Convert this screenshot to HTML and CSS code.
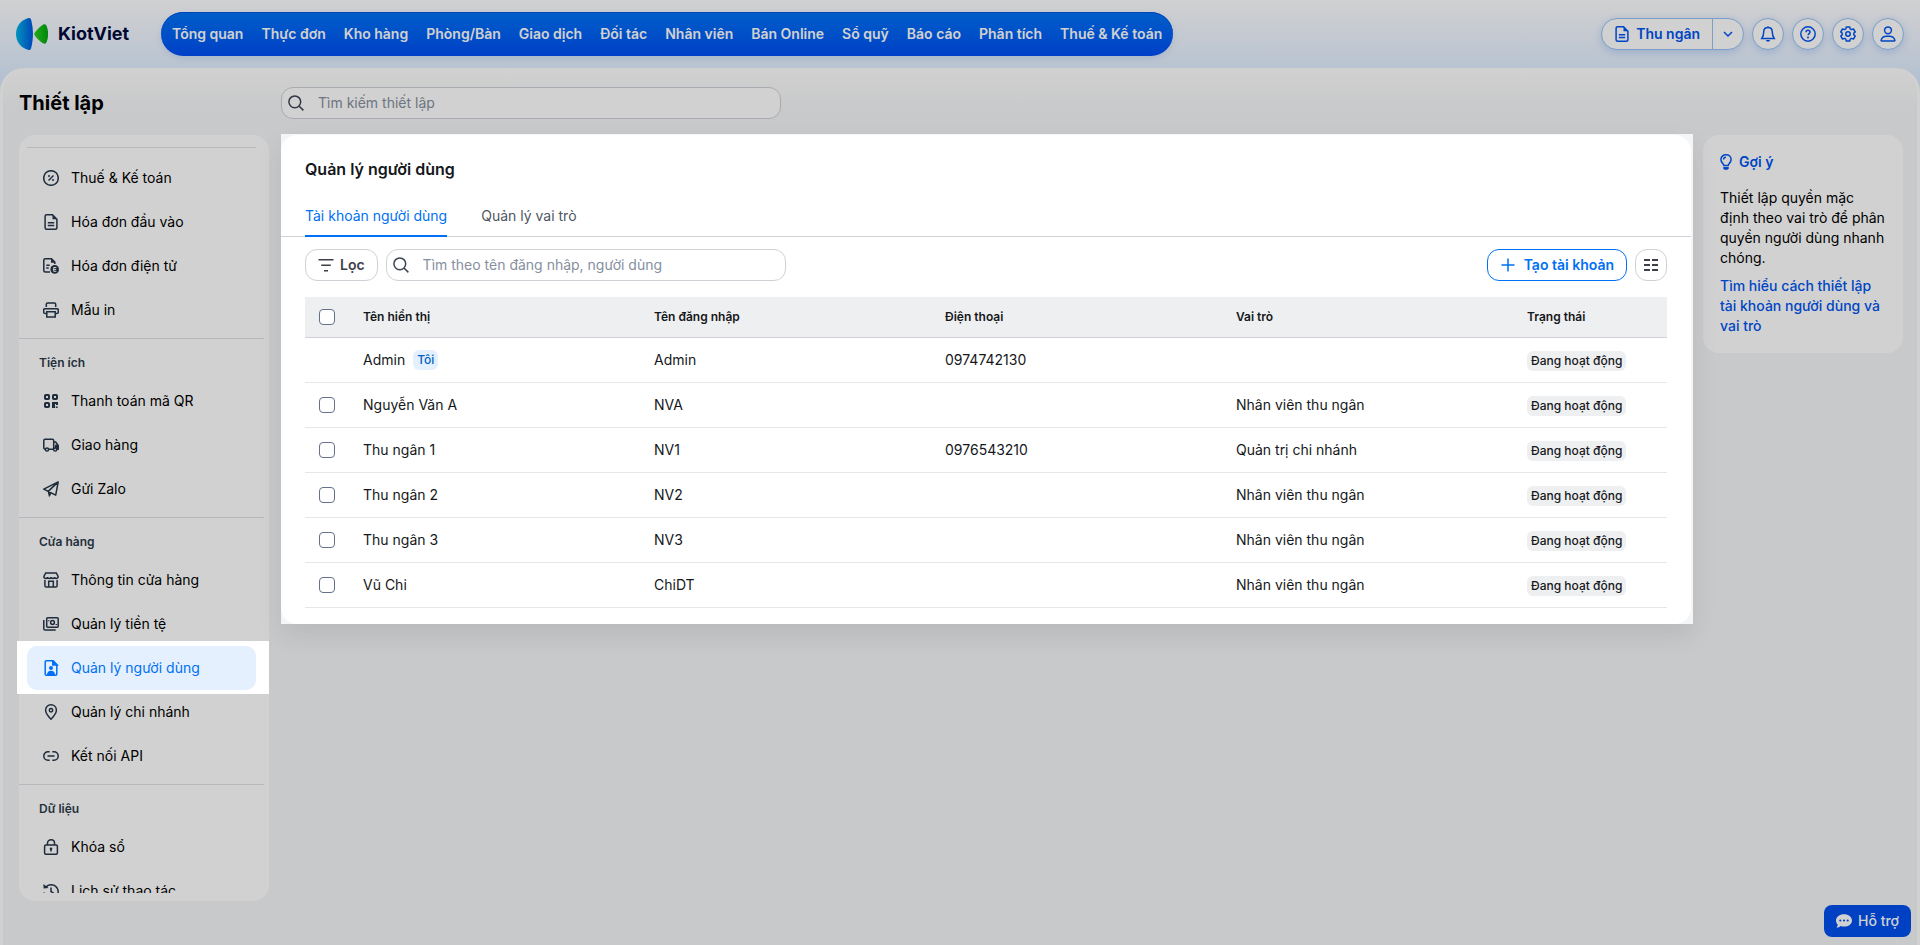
FILE: index.html
```html
<!DOCTYPE html>
<html lang="vi">
<head>
  <meta charset="UTF-8">
  <meta name="viewport" content="width=device-width, initial-scale=1">
  <title>KiotViet - Thiết lập</title>
  <link rel="stylesheet" href="styles.css">
</head>
<body>
  <!-- icon sprite -->
  <svg class="sprite" aria-hidden="true">
    <symbol id="i-doc" viewBox="0 0 16 16"><path d="M9.5.8H3.600c-.9 0-1.500.6-1.500 1.500v11.400c0 .9.6 1.500 1.500 1.500h8.800c.9 0 1.500-.6 1.500-1.500V5.200z"/><path d="M9.500.8v4.400h4.400z" fill="currentColor" stroke="none"/><path d="M4.800 8.800h6.400M4.800 11.600h6.400"/></symbol>
    <symbol id="i-chev" viewBox="0 0 16 16"><path d="m4 6 4 4 4-4"/></symbol>
    <symbol id="i-bell" viewBox="0 0 16 16"><path d="M8 1.500c-2.700 0-4.300 2-4.300 4.500 0 3.300-.8 4.800-1.900 6.400h12.400c-1.100-1.600-1.900-3.100-1.900-6.400 0-2.500-1.600-4.500-4.300-4.500zM8 .3v1.200"/><path d="M5.800 14h4.400c-.3 1-1.100 1.700-2.200 1.700S6.100 15 5.800 14z" fill="currentColor" stroke="none"/></symbol>
    <symbol id="i-help" viewBox="0 0 16 16"><circle cx="8" cy="8" r="7.200"/><path d="M6 6.300c0-1.200.8-2 2-2s2 .8 2 1.900c0 1.300-1.900 1.500-1.900 3.100"/><circle cx="8" cy="11.600" r="1" fill="currentColor" stroke="none"/></symbol>
    <symbol id="i-gear" viewBox="0 0 16 16"><path stroke-linejoin="round" d="M6.300.9h3.400l.5 2 1.300.7 2-.6 1.700 2.900L13.800 7.300v1.400l1.400 1.400-1.700 2.900-2-.6-1.300.7-.5 2H6.300l-.5-2-1.300-.7-2 .6L.8 10.100l1.400-1.400V7.300L.8 5.900 2.500 3l2 .6 1.300-.7z"/><circle cx="8" cy="8" r="2.200"/></symbol>
    <symbol id="i-user" viewBox="0 0 16 16"><circle cx="8" cy="4.300" r="3.400"/><path d="M1.800 15c-.6 0-.9-.5-.7-1 .8-2.300 2.900-3.800 5.400-3.800h3c2.500 0 4.600 1.500 5.400 3.800.2.500-.1 1-.7 1z"/></symbol>
    <symbol id="i-search" viewBox="0 0 16 16"><circle cx="6.800" cy="6.800" r="5.900"/><path d="m11 11 4.400 4.400"/></symbol>
    <symbol id="i-percent" viewBox="0 0 16 16"><circle cx="8" cy="8" r="7.300"/><path d="m5.500 10.500 5-5"/><circle cx="6" cy="6" r="1" fill="currentColor" stroke="none"/><circle cx="10" cy="10" r="1" fill="currentColor" stroke="none"/></symbol>
    <symbol id="i-einvoice" viewBox="0 0 16 16"><path d="M7 14H2.300C1.400 14 .8 13.400.8 12.500V2.300C.8 1.400 1.400.8 2.300.8H8.500l3.300 3.300v2"/><path d="M8 .8v4h4z" fill="currentColor" stroke="none"/><path d="M3.300 7.300h3.400M3.300 10h2.400"/><circle cx="11.700" cy="11.400" r="4.300" fill="currentColor" stroke="none"/><path d="M13.300 9.500h-2.600v3.800h2.600M10.700 11.400h2.400" class="knock"/></symbol>
    <symbol id="i-print" viewBox="0 0 16 16"><path d="M3.300 5V2.200c0-.8.500-1.300 1.300-1.300h6.800c.8 0 1.300.5 1.300 1.300V5M3.600 11.500H2c-.8 0-1.300-.5-1.300-1.300V8c0-.8.500-1.300 1.300-1.300h12c.8 0 1.300.5 1.300 1.300v2.200c0 .8-.5 1.300-1.300 1.300h-1.600"/><path d="M3.800 9.700h8.400v5.400H3.800z"/></symbol>
    <symbol id="i-qr" viewBox="0 0 16 16"><g stroke-width="2"><rect x="2" y="2" width="4" height="4" rx=".8"/><rect x="10" y="2" width="4" height="4" rx=".8"/><rect x="2" y="10" width="4" height="4" rx=".8"/></g><path d="M9 9h6v3h-2v-1h-1v4H9zM12.800 13.600h1.200V15h-1.200zM14.400 13.600H15V15h-.6z" fill="currentColor" stroke="none"/></symbol>
    <symbol id="i-truck" viewBox="0 0 16 16"><path d="M2.200 12.200c-.9 0-1.400-.6-1.400-1.400V3.500c0-.8.500-1.300 1.300-1.300h7.300c.8 0 1.300.5 1.300 1.300v8.700H6M10.700 5h2l2.500 3.500v3.700h-1"/><path d="M12.300 7.500h2.200l1.300 1.800v3.100h-1.500L11.500 11z" fill="currentColor" stroke="none"/><circle cx="4" cy="12.500" r="1.600" class="hole"/><circle cx="12.200" cy="12.500" r="1.600" class="hole"/></symbol>
    <symbol id="i-send" viewBox="0 0 16 16"><path stroke-linejoin="round" d="M15.200.9.8 8.200l4.400 2.200 7.500 3.800zM15.200.9 5.200 10.400"/><path d="M5.200 10.400 8.200 12 6.300 15.400z" fill="currentColor" stroke-width="1"/></symbol>
    <symbol id="i-store" viewBox="0 0 16 16"><path d="M2.700.9h10.600l1.800 3.600c0 1.300-.9 2-1.900 2s-1.700-.7-1.700-1.500c0 .8-.8 1.500-1.800 1.500S8 5.800 8 5c0 .8-.7 1.500-1.700 1.500S4.500 5.800 4.500 5c0 .8-.7 1.500-1.700 1.500s-1.900-.7-1.900-2z"/><path d="M1.900 8v5.700c0 .8.500 1.400 1.400 1.400h9.400c.9 0 1.400-.6 1.400-1.400V8M5.700 15V9.300h4.600V15"/></symbol>
    <symbol id="i-money" viewBox="0 0 16 16"><rect x="3.700" y="1.800" width="11.500" height="9.400" rx="1"/><circle cx="9.500" cy="6.500" r="1.900"/><path d="M.8 4v8.800c0 .8.500 1.300 1.300 1.300h10.600M5.600 4.200v1M13.300 7.900v1"/></symbol>
    <symbol id="i-badge" viewBox="0 0 16 16"><path d="M9.800.8H3.500c-.8 0-1.300.5-1.300 1.300v11.800c0 .8.500 1.300 1.300 1.300h9c.8 0 1.300-.5 1.300-1.300V4.800z"/><path d="M9.800.5v4.500h4.300z" fill="currentColor"/><circle cx="8" cy="8" r="2" fill="currentColor" stroke="none"/><path d="M3.800 15c.3-2.800 1.800-4.300 4.200-4.300s3.900 1.500 4.200 4.300z" fill="currentColor" stroke="none"/></symbol>
    <symbol id="i-pin" viewBox="0 0 16 16"><path d="M8 15.200C4.700 11.800 2.600 9 2.600 6.200 2.600 3 5 .8 8 .8s5.400 2.200 5.400 5.400c0 2.800-2.100 5.600-5.400 9z"/><circle cx="8" cy="6.200" r="1.700"/></symbol>
    <symbol id="i-link" viewBox="0 0 16 16"><path d="M6.700 3.700H5C2.600 3.700.8 5.600.8 8S2.600 12.300 5 12.300h1.700M9.300 3.700H11c2.400 0 4.200 1.900 4.200 4.300s-1.800 4.300-4.200 4.300H9.300M4.500 8h7"/></symbol>
    <symbol id="i-lock" viewBox="0 0 16 16"><rect x="1.600" y="6" width="12.800" height="9.200" rx="1.200"/><path d="M4.500 6V4C4.500 2.100 6 .8 8 .8s3.500 1.300 3.500 3.200v2M8 10v2.600"/><circle cx="8" cy="9.800" r="1.300" fill="currentColor" stroke="none"/></symbol>
    <symbol id="i-history" viewBox="0 0 16 16"><path d="M2.600 4.500A7 7 0 1 1 1.200 9.500M8 4.500V8.500l2.800 1.800"/><path d="M.4 1 .6 5.600 5.600 5z" fill="currentColor" stroke="none"/></symbol>
    <symbol id="i-filter" viewBox="0 0 16 16"><path d="M.5 2.700h15M3.200 8.300h9.600M6 13.800h4"/></symbol>
    <symbol id="i-plus" viewBox="0 0 16 16"><path d="M8 1.500v13M1.500 8h13"/></symbol>
    <symbol id="i-cols" viewBox="0 0 16 16"><path stroke-width="2" d="M1 3h6M9 3h6M1 8h6M9 8h6M1 13h6M9 13h6"/></symbol>
    <symbol id="i-bulb" viewBox="0 0 12 16"><path d="M3.800 11.500C3.600 9.400.9 8.600.9 5.400.9 2.700 3.100.8 6 .8s5.100 1.900 5.100 4.600c0 3.200-2.700 4-2.900 6.100zM3.600 5.400C3.600 4 4.500 3.200 6 3.200"/><path d="M3.300 13h5.400v1.200L7.600 15.800H4.400l-1.100-1.600z" fill="currentColor" stroke="none"/></symbol>
    <symbol id="i-chat" viewBox="0 0 16 16"><path fill-rule="evenodd" d="M8 1.200c4.400 0 8 2.700 8 6.200s-3.600 6.200-8 6.200c-1.200 0-2.400-.2-3.400-.6-1 .9-2.400 1.700-4.300 1.800.8-.9 1.400-2 1.500-3.100C.7 10.600 0 9.100 0 7.400c0-3.500 3.600-6.200 8-6.200zM4.300 6.400a1.100 1.100 0 1 0 0 2.200 1.100 1.100 0 0 0 0-2.200zm3.700 0a1.100 1.100 0 1 0 0 2.200 1.100 1.100 0 0 0 0-2.200zm3.700 0a1.100 1.100 0 1 0 0 2.200 1.100 1.100 0 0 0 0-2.200z" fill="currentColor" stroke="none"/></symbol>
  </svg>

  <header class="topbar">
    <a class="logo" href="#">
      <svg class="logo-mark" viewBox="0 0 32 32" aria-hidden="true">
        <defs>
          <linearGradient id="lgBlue"><stop offset="0" stop-color="#00b5e8"/><stop offset="1" stop-color="#0057e0"/></linearGradient>
          <linearGradient id="lgGreen"><stop offset="0" stop-color="#2fce1c"/><stop offset="1" stop-color="#00a410"/></linearGradient>
        </defs>
        <path d="M12.500 0C5 1.800 0 8 0 16s5 14.200 12.500 16c1.500.3 2.300-.5 2.700-2 2.300-9 2.300-19 0-28-.4-1.500-1.200-2.300-2.700-2z" fill="url(#lgBlue)"/>
        <path d="M18.600 14.800C21 11.500 24 8.500 27 6.700c1.500-.9 2.800-.5 3.500 1 2.200 5 2.200 11.600 0 16.600-.7 1.500-2 1.900-3.500 1-3-1.800-6-4.800-8.400-8.100-.5-.8-.5-1.600 0-2.400z" fill="url(#lgGreen)"/>
      </svg>
      <span>KiotViet</span>
    </a>
    <nav class="main-nav">
      <a href="#">Tổng quan</a>
      <a href="#">Thực đơn</a>
      <a href="#">Kho hàng</a>
      <a href="#">Phòng/Bàn</a>
      <a href="#">Giao dịch</a>
      <a href="#">Đối tác</a>
      <a href="#">Nhân viên</a>
      <a href="#">Bán Online</a>
      <a href="#">Sổ quỹ</a>
      <a href="#">Báo cáo</a>
      <a href="#">Phân tích</a>
      <a href="#">Thuế &amp; Kế toán</a>
    </nav>
    <div class="top-actions">
      <div class="split-btn">
        <button type="button" class="split-main"><svg class="icon"><use href="#i-doc"/></svg>Thu ngân</button>
        <button type="button" class="split-arrow" aria-label="Mở rộng"><svg class="icon"><use href="#i-chev"/></svg></button>
      </div>
      <button type="button" class="round-btn" aria-label="Thông báo"><svg class="icon"><use href="#i-bell"/></svg></button>
      <button type="button" class="round-btn" aria-label="Trợ giúp"><svg class="icon"><use href="#i-help"/></svg></button>
      <button type="button" class="round-btn" aria-label="Thiết lập"><svg class="icon"><use href="#i-gear"/></svg></button>
      <button type="button" class="round-btn" aria-label="Tài khoản"><svg class="icon"><use href="#i-user"/></svg></button>
    </div>
  </header>

  <main class="page">
    <h1>Thiết lập</h1>
    <div class="page-search">
      <label class="search-box" aria-label="Tìm kiếm thiết lập">
        <svg class="icon"><use href="#i-search"/></svg>
        <input type="text" placeholder="Tìm kiếm thiết lập">
      </label>
    </div>

    <aside class="sidebar">
      <div class="side-scroll">
        <div class="side-group first">
          <a class="side-item" href="#"><svg class="icon"><use href="#i-percent"/></svg>Thuế &amp; Kế toán</a>
          <a class="side-item" href="#"><svg class="icon"><use href="#i-doc"/></svg>Hóa đơn đầu vào</a>
          <a class="side-item" href="#"><svg class="icon"><use href="#i-einvoice"/></svg>Hóa đơn điện tử</a>
          <a class="side-item" href="#"><svg class="icon"><use href="#i-print"/></svg>Mẫu in</a>
        </div>
        <div class="side-group">
          <h3>Tiện ích</h3>
          <a class="side-item" href="#"><svg class="icon"><use href="#i-qr"/></svg>Thanh toán mã QR</a>
          <a class="side-item" href="#"><svg class="icon"><use href="#i-truck"/></svg>Giao hàng</a>
          <a class="side-item" href="#"><svg class="icon"><use href="#i-send"/></svg>Gửi Zalo</a>
        </div>
        <div class="side-group">
          <h3>Cửa hàng</h3>
          <a class="side-item" href="#"><svg class="icon"><use href="#i-store"/></svg>Thông tin cửa hàng</a>
          <a class="side-item" href="#"><svg class="icon"><use href="#i-money"/></svg>Quản lý tiền tệ</a>
          <a class="side-item active" href="#"><svg class="icon"><use href="#i-badge"/></svg>Quản lý người dùng</a>
          <a class="side-item" href="#"><svg class="icon"><use href="#i-pin"/></svg>Quản lý chi nhánh</a>
          <a class="side-item" href="#"><svg class="icon"><use href="#i-link"/></svg>Kết nối API</a>
        </div>
        <div class="side-group">
          <h3>Dữ liệu</h3>
          <a class="side-item" href="#"><svg class="icon"><use href="#i-lock"/></svg>Khóa sổ</a>
          <a class="side-item" href="#"><svg class="icon"><use href="#i-history"/></svg>Lịch sử thao tác</a>
        </div>
      </div>
    </aside>

    <section class="panel">
      <div class="card">
        <h2>Quản lý người dùng</h2>
        <div class="tabs">
          <button type="button" class="tab active">Tài khoản người dùng</button>
          <button type="button" class="tab">Quản lý vai trò</button>
        </div>
        <div class="toolbar">
          <button type="button" class="btn btn-filter"><svg class="icon"><use href="#i-filter"/></svg>Lọc</button>
          <label class="search-box" aria-label="Tìm người dùng">
            <svg class="icon"><use href="#i-search"/></svg>
            <input type="text" placeholder="Tìm theo tên đăng nhập, người dùng">
          </label>
          <button type="button" class="btn btn-create"><svg class="icon"><use href="#i-plus"/></svg>Tạo tài khoản</button>
          <button type="button" class="btn btn-cols" aria-label="Tùy chỉnh cột"><svg class="icon"><use href="#i-cols"/></svg></button>
        </div>
        <table class="users">
          <thead>
            <tr>
              <th class="col-check"><input type="checkbox" aria-label="Chọn tất cả"></th>
              <th>Tên hiển thị</th>
              <th>Tên đăng nhập</th>
              <th>Điện thoại</th>
              <th>Vai trò</th>
              <th class="col-status">Trạng thái</th>
            </tr>
          </thead>
          <tbody>
            <tr>
              <td></td>
              <td>Admin<span class="tag tag-me">Tôi</span></td>
              <td>Admin</td>
              <td>0974742130</td>
              <td></td>
              <td><span class="tag">Đang hoạt động</span></td>
            </tr>
            <tr>
              <td><input type="checkbox" aria-label="Chọn Nguyễn Văn A"></td>
              <td>Nguyễn Văn A</td>
              <td>NVA</td>
              <td></td>
              <td>Nhân viên thu ngân</td>
              <td><span class="tag">Đang hoạt động</span></td>
            </tr>
            <tr>
              <td><input type="checkbox" aria-label="Chọn Thu ngân 1"></td>
              <td>Thu ngân 1</td>
              <td>NV1</td>
              <td>0976543210</td>
              <td>Quản trị chi nhánh</td>
              <td><span class="tag">Đang hoạt động</span></td>
            </tr>
            <tr>
              <td><input type="checkbox" aria-label="Chọn Thu ngân 2"></td>
              <td>Thu ngân 2</td>
              <td>NV2</td>
              <td></td>
              <td>Nhân viên thu ngân</td>
              <td><span class="tag">Đang hoạt động</span></td>
            </tr>
            <tr>
              <td><input type="checkbox" aria-label="Chọn Thu ngân 3"></td>
              <td>Thu ngân 3</td>
              <td>NV3</td>
              <td></td>
              <td>Nhân viên thu ngân</td>
              <td><span class="tag">Đang hoạt động</span></td>
            </tr>
            <tr>
              <td><input type="checkbox" aria-label="Chọn Vũ Chi"></td>
              <td>Vũ Chi</td>
              <td>ChiDT</td>
              <td></td>
              <td>Nhân viên thu ngân</td>
              <td><span class="tag">Đang hoạt động</span></td>
            </tr>
          </tbody>
        </table>
      </div>
    </section>

    <aside class="hint">
      <h3><svg class="icon icon-bulb"><use href="#i-bulb"/></svg>Gợi ý</h3>
      <p>Thiết lập quyền mặc định theo vai trò để phân quyền người dùng nhanh chóng.</p>
      <a href="#">Tìm hiểu cách thiết lập tài khoản người dùng và vai trò</a>
    </aside>
  </main>

  <button type="button" class="support"><svg class="icon"><use href="#i-chat"/></svg>Hỗ trợ</button>

  <!-- dims everything except the highlighted menu item and panel -->
  <div class="overlay"></div>
</body>
</html>
```

FILE: styles.css
```css
* {
  box-sizing: border-box;
}
body {
  margin: 0;
  height: 100vh;
  display: flex;
  flex-direction: column;
  overflow: hidden;
  font-family: Inter, "Liberation Sans", sans-serif;
  font-size: 14px;
  line-height: 20px;
  color: #000;
  background: linear-gradient(#fff, #dcebff 80px);
}
h1, h2, h3, p {
  margin: 0;
}
a {
  color: inherit;
  text-decoration: none;
}
button, input {
  font: inherit;
  color: inherit;
}
button {
  cursor: pointer;
}
.sprite {
  position: absolute;
  width: 0;
  height: 0;
}
.icon {
  width: 16px;
  height: 16px;
  flex: none;
  fill: none;
  stroke: currentColor;
  stroke-width: 1.5;
}
.knock {
  stroke: #fff;
  stroke-width: 1;
}
.hole {
  fill: #fff;
}
.overlay {
  position: fixed;
  inset: 0;
  z-index: 5;
  background: rgba(0, 0, 0, 0.18);
  pointer-events: none;
}

/* top bar */
.topbar {
  height: 68px;
  flex: none;
  display: flex;
  align-items: center;
  padding: 0 16px;
}
.logo {
  display: flex;
  align-items: center;
  gap: 10px;
  width: 145px;
  font-size: 18px;
  font-weight: 700;
  color: #00093c;
}
.logo-mark {
  width: 32px;
  height: 32px;
}
.main-nav {
  display: flex;
  align-items: center;
  gap: 18px;
  height: 44px;
  padding: 0 11px;
  border-radius: 22px;
  background: linear-gradient(#0074f4, #004ef4);
  color: #fff;
  font-weight: 600;
  white-space: nowrap;
  box-shadow: inset 0 1px #0052e0, 0 2px 6px rgba(0, 80, 200, 0.12);
}
.top-actions {
  display: flex;
  gap: 8px;
  margin-left: auto;
  color: #0055f0;
}
.split-btn, .round-btn {
  height: 32px;
  border: 1px solid #97c3f5;
  border-radius: 16px;
  background: #fff;
  box-shadow: 0 2px 8px rgba(0, 90, 220, 0.2);
}
.split-btn {
  display: flex;
}
.split-btn button {
  display: flex;
  align-items: center;
  border: 0;
  background: none;
}
.split-main {
  gap: 6px;
  padding: 0 12px;
  font-weight: 600;
}
.split-btn .split-arrow {
  padding: 0 7px;
  border-left: 1px solid #97c3f5;
}
.round-btn {
  width: 32px;
  padding: 0;
  display: grid;
  place-items: center;
}

/* page */
.page {
  flex: 1;
  min-height: 0;
  display: grid;
  grid-template-columns: 250px 1fr 200px;
  grid-template-rows: 32px 1fr;
  gap: 16px 12px;
  padding: 19px 14px 44px 16px;
  border: solid #fff;
  border-width: 0 3px;
  border-radius: 24px 24px 0 0;
  background: linear-gradient(#fff, #f5f6f8 40px);
}
h1 {
  font-size: 20px;
  line-height: 32px;
  font-weight: 700;
}
.page-search {
  grid-column: 2 / 4;
  display: flex;
}
.search-box {
  display: flex;
  align-items: center;
  gap: 14px;
  height: 32px;
  padding: 0 6px;
  border: 1px solid #ced1d6;
  border-radius: 12px;
  background: #fff;
  color: #3c4553;
}
.page-search .search-box {
  width: 500px;
}
.search-box input {
  flex: 1;
  min-width: 0;
  padding: 0;
  border: 0;
  outline: 0;
  background: none;
}
.search-box input::placeholder {
  color: #868f9e;
}

/* sidebar */
.sidebar {
  min-height: 0;
  padding: 12px 0 8px;
  border-radius: 16px;
  background: #fff;
}
.side-scroll {
  height: 100%;
  overflow-y: clip;
}
.side-group {
  margin-right: 5px;
  padding: 16px 8px 6px;
  border-top: 1px solid #dfe1e5;
}
.side-group.first {
  margin: 0 13px 0 8px;
  padding: 8px 0 6px;
}
.side-group h3 {
  margin-bottom: 8px;
  padding-left: 12px;
  font-size: 12px;
  line-height: 16px;
  font-weight: 600;
  color: #2c3a4b;
}
.side-item {
  display: flex;
  align-items: center;
  gap: 12px;
  height: 44px;
  padding: 0 16px;
  border-radius: 10px;
}
.side-item .icon {
  color: #26364a;
}
/* highlighted entry sits above the overlay on a white block */
.side-item.active {
  position: relative;
  z-index: 6;
  width: 229px;
  color: #0070f4;
}
.side-item.active::before,
.side-item.active::after {
  content: "";
  position: absolute;
  z-index: -1;
}
.side-item.active::before {
  inset: -5px -13px -4px -10px;
  background: #fff;
}
.side-item.active::after {
  inset: 0;
  border-radius: 10px;
  background: #e4f0fd;
}
.side-item.active .icon {
  color: #0070f4;
}

/* users panel */
.panel {
  position: relative;
  z-index: 6;
  align-self: start;
}
.panel::before {
  content: "";
  position: absolute;
  z-index: -1;
  inset: -1px -2px 0 0;
  background: #f4f5f6;
  box-shadow: 0 12px 24px rgba(0, 0, 0, 0.08);
}
.card {
  padding: 24px 24px 16px;
  border-radius: 16px;
  background: #fff;
}
h2 {
  font-size: 16px;
  line-height: 20px;
  font-weight: 600;
  color: #15171a;
}
.tabs {
  display: flex;
  gap: 34px;
  margin: 16px -24px 12px;
  padding: 0 24px;
  border-bottom: 1px solid #ced1d6;
}
.tab {
  height: 42px;
  margin-bottom: -1px;
  padding: 2px 0 0;
  border: 0;
  border-bottom: 2px solid transparent;
  background: none;
  color: #4f5661;
}
.tab.active {
  color: #0070f4;
  border-bottom-color: #0070f4;
}
.toolbar {
  display: flex;
  gap: 8px;
  margin-bottom: 16px;
}
.toolbar .search-box {
  width: 400px;
}
.btn {
  display: flex;
  align-items: center;
  justify-content: center;
  gap: 6px;
  height: 32px;
  padding: 0 12px;
  border: 1px solid #ced1d6;
  border-radius: 12px;
  background: #fff;
  color: #3c4048;
  font-weight: 600;
}
.btn-create {
  gap: 8px;
  margin-left: auto;
  border-color: #0070f4;
  color: #0070f4;
}
.btn-cols {
  width: 32px;
  padding: 0;
}
.users {
  width: 100%;
  table-layout: fixed;
  border-collapse: separate;
  border-spacing: 0;
  color: #15171a;
}
.users th, .users td {
  height: 45px;
  padding: 0 12px;
  text-align: left;
  border-bottom: 1px solid #e5e7ea;
}
.users th {
  height: 41px;
  font-size: 12px;
  line-height: 16px;
  font-weight: 600;
  background: #eeeff1;
  border-bottom-color: #ced1d6;
}
.users .col-check {
  width: 46px;
}
.users .col-status {
  width: 152px;
}
.users input {
  appearance: none;
  display: block;
  width: 16px;
  height: 16px;
  margin: 0 0 0 2px;
  border: 1px solid #66708a;
  border-radius: 4px;
  background: #fff;
}
.tag {
  display: inline-block;
  padding: 0 4px;
  border-radius: 6px;
  background: #eeeff1;
  font-size: 12px;
  line-height: 20px;
  font-weight: 500;
  vertical-align: middle;
}
.tag-me {
  margin-left: 8px;
  vertical-align: top;
  background: #e4f0fd;
  color: #0060c8;
}

/* hint card */
.hint {
  align-self: start;
  padding: 17px;
  border-radius: 16px;
  background: #fff;
}
.hint h3 {
  display: flex;
  align-items: center;
  gap: 7px;
  margin-bottom: 16px;
  font-size: 14px;
  font-weight: 600;
  color: #0055f0;
}
.icon-bulb {
  width: 12px;
}
.hint p {
  margin-bottom: 8px;
}
.hint a {
  display: block;
  color: #0055f0;
  font-weight: 500;
}
.support {
  position: fixed;
  right: 9px;
  bottom: 8px;
  display: flex;
  align-items: center;
  gap: 6px;
  height: 32px;
  padding: 0 12px;
  border: 0;
  border-radius: 8px;
  background: #0050f0;
  color: #fff;
  font-weight: 500;
}
```
